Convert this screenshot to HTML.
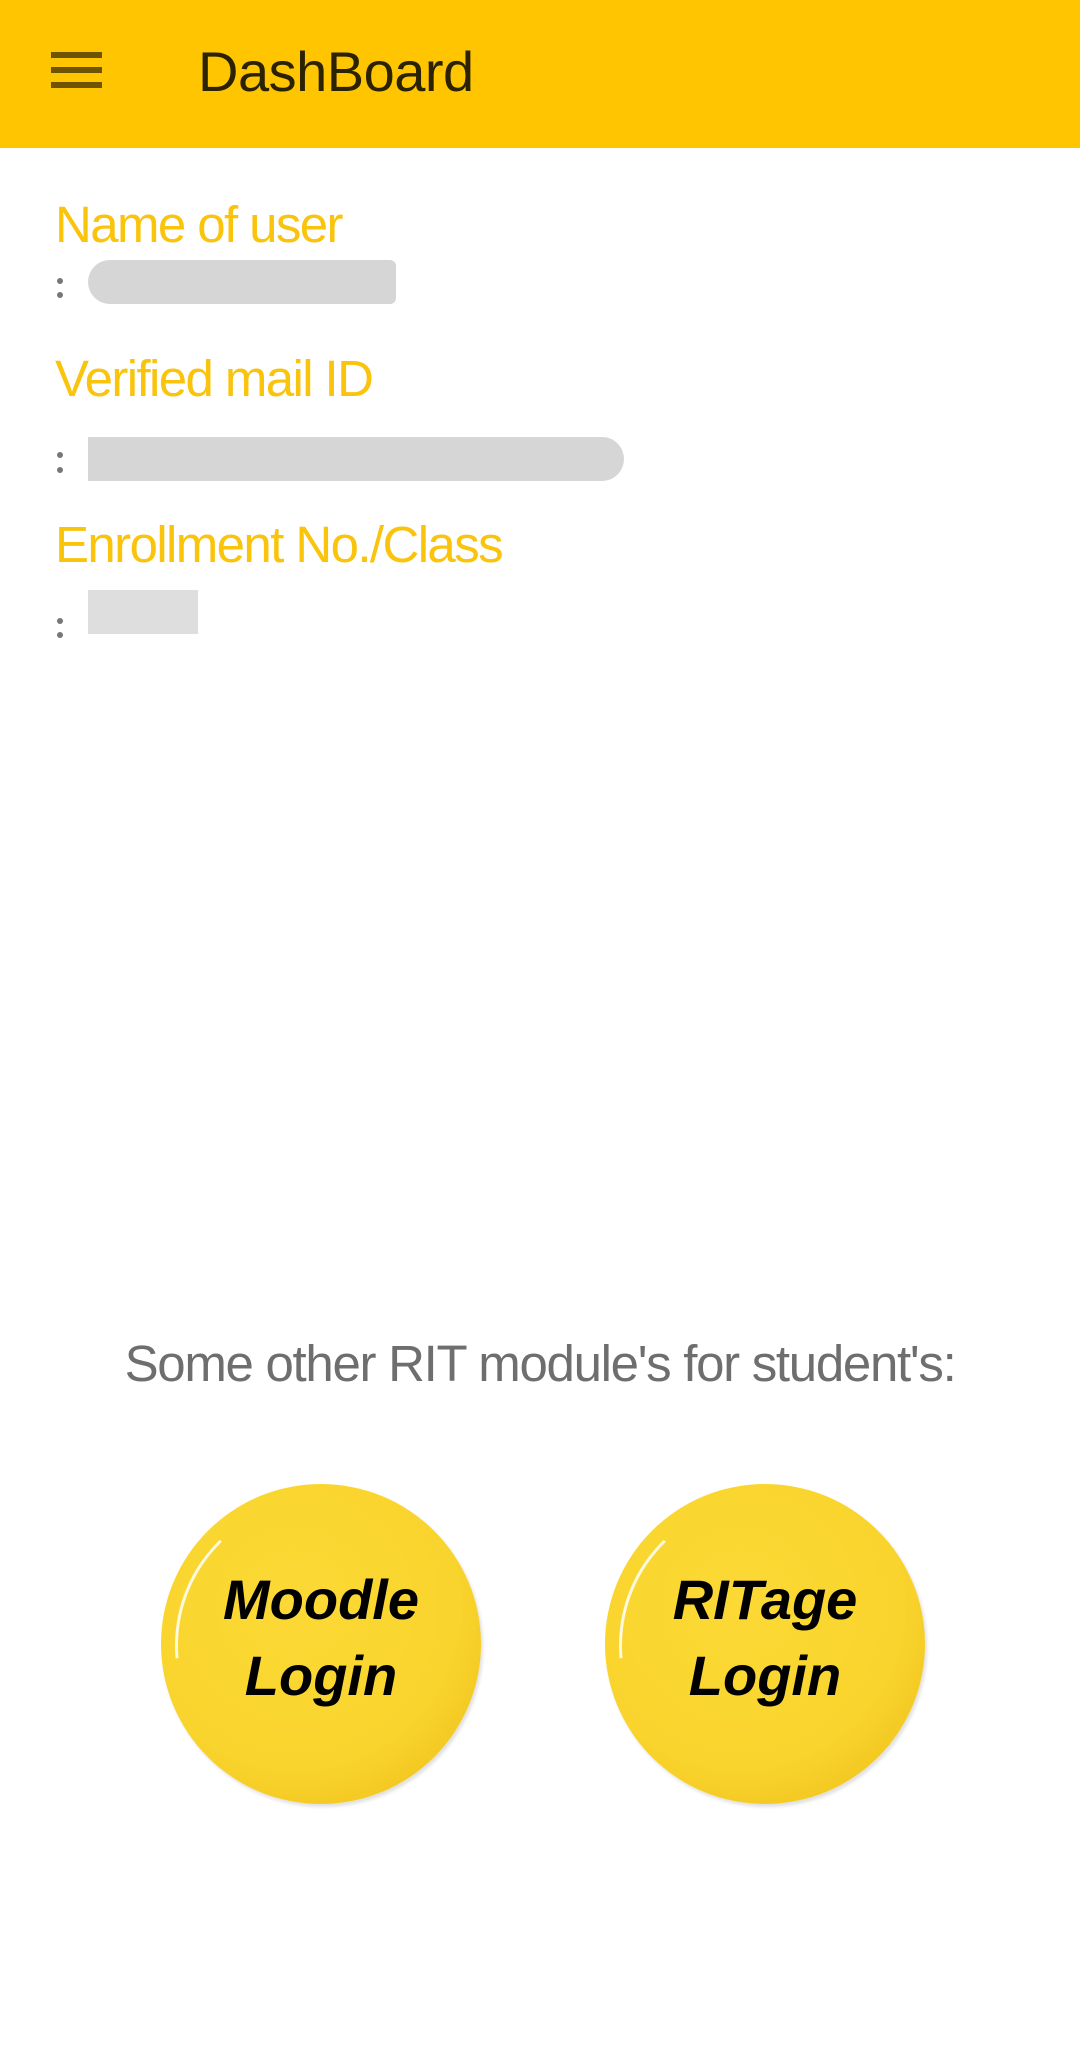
<!DOCTYPE html>
<html><head><meta charset="utf-8"><style>
html,body{margin:0;padding:0;background:#fff;width:1080px;height:2067px;overflow:hidden;font-family:"Liberation Sans",sans-serif;position:relative}
.hdr{position:absolute;left:0;top:0;width:1080px;height:148px;background:#FFC500}
.ham{position:absolute;left:51px;width:51px;height:6px;background:#6e5300}
.title{position:absolute;left:198px;top:39px;font-size:56px;color:#2b2200;letter-spacing:-0.5px}
.lbl{position:absolute;left:55px;font-size:51px;color:#FAC30C;letter-spacing:-1.6px}
.colon{position:absolute;left:57px;width:6px;height:6px;border-radius:3px;background:#777}
.blur{position:absolute;background:#d6d6d6;border-radius:22px 6px 6px 22px}
.sub{position:absolute;left:0;width:1080px;text-align:center;top:1334px;font-size:51px;color:#6e6e6e;letter-spacing:-1.3px}
.btn{position:absolute;top:1484px;width:320px;height:320px;border-radius:50%;
background:radial-gradient(circle at 42% 38%,#fcd935 0%,#f9d42d 60%,#f2c61f 80%,#c99b10 100%);
box-shadow:2px 3px 3px rgba(0,0,0,0.12)}
.btn:before{content:"";position:absolute;left:14px;top:14px;width:292px;height:292px;border-radius:50%;border-top:3px solid rgba(255,255,255,0.85);border-left:3px solid transparent;transform:rotate(-50deg);clip-path:polygon(0 0,55% 0,55% 30%,0 30%)}
.bt{position:absolute;left:0;width:320px;text-align:center;font-weight:bold;font-style:italic;font-size:56px;color:#000;line-height:76px;top:78px}
</style></head><body>
<div class="hdr">
<div class="ham" style="top:52px"></div>
<div class="ham" style="top:67px"></div>
<div class="ham" style="top:82px"></div>
<div class="title">DashBoard</div>
</div>
<div class="lbl" style="top:195px">Name of user</div>
<div class="colon" style="top:278px"></div><div class="colon" style="top:292px"></div>
<div class="blur" style="left:88px;top:260px;width:308px;height:44px"></div>
<div class="lbl" style="top:349px">Verified mail ID</div>
<div class="colon" style="top:452px"></div><div class="colon" style="top:467px"></div>
<div class="blur" style="left:88px;top:437px;width:536px;height:44px;border-radius:0 22px 22px 0"></div>
<div class="lbl" style="top:515px">Enrollment No./Class</div>
<div class="colon" style="top:618px"></div><div class="colon" style="top:632px"></div>
<div class="blur" style="left:88px;top:590px;width:110px;height:44px;border-radius:0;background:#dedede"></div>
<div class="sub">Some other RIT module's for student's:</div>
<div class="btn" style="left:161px"><div class="bt">Moodle<br>Login</div></div>
<div class="btn" style="left:605px"><div class="bt">RITage<br>Login</div></div>
</body></html>
